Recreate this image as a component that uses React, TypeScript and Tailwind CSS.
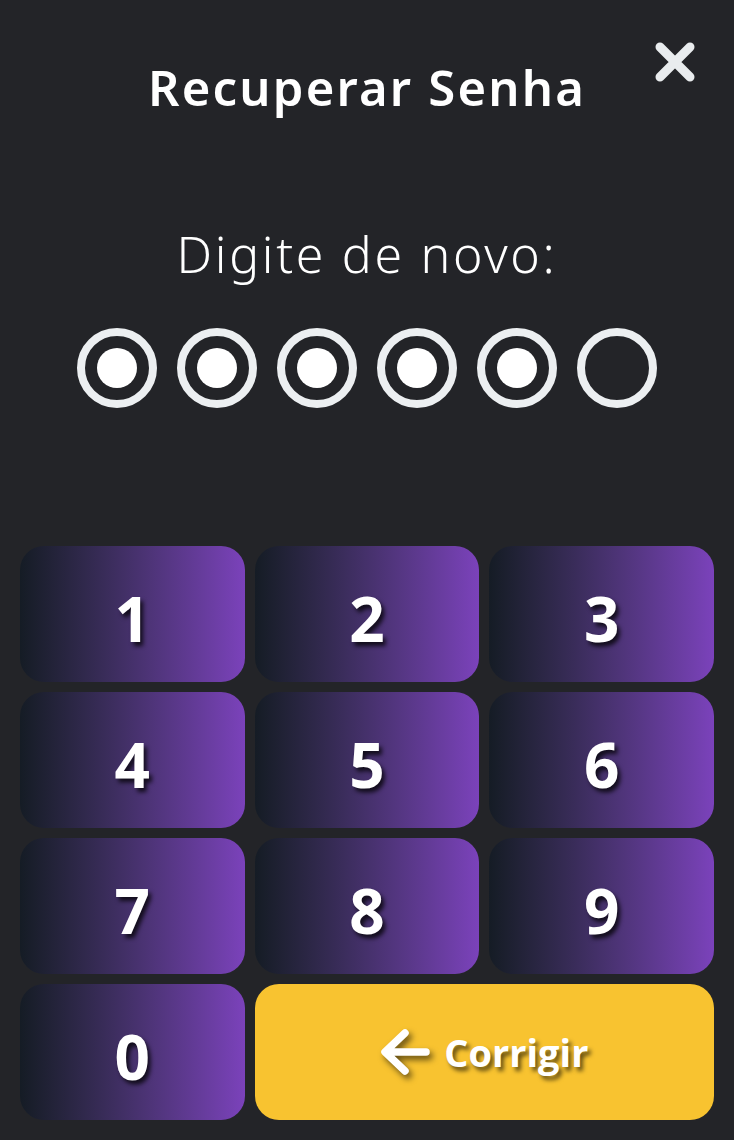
import React from "react";

const keys = ["1", "2", "3", "4", "5", "6", "7", "8", "9"];

function Key({ label }: { label: string }) {
  return (
    <button className="h-[136px] rounded-[24px] bg-gradient-to-r from-[#151c25] to-[#7b42bb] flex items-center justify-center pt-[8px]">
      <span className="text-white text-[62px] font-bold leading-none [text-shadow:3px_4px_4px_rgba(0,0,0,0.75)] [font-family:'Open_Sans',sans-serif]">
        {label}
      </span>
    </button>
  );
}

export default function App() {
  const filled = 5;
  return (
    <div className="relative w-[734px] h-[1140px] bg-[#232428] flex flex-col overflow-hidden [font-family:'Noto_Sans',sans-serif]">
      <button className="absolute right-[38px] top-[41px] w-[42px] h-[42px]" aria-label="Fechar">
        <svg viewBox="0 0 42 42" className="w-full h-full">
          <path d="M6 6L36 36M36 6L6 36" stroke="#e9ecee" strokeWidth="9" strokeLinecap="round" />
        </svg>
      </button>
      <h1 className="mt-[55px] text-center text-white text-[49px] font-semibold leading-[64px] tracking-[2.2px]">
        Recuperar Senha
      </h1>
      <p className="mt-[103px] text-center text-white text-[50px] font-light leading-[64px] tracking-[2.7px]">
        Digite de novo:
      </p>
      <div className="mt-[42px] flex justify-center gap-[20px]">
        {Array.from({ length: 6 }).map((_, i) => (
          <div
            key={i}
            className="w-[80px] h-[80px] rounded-full border-[8px] border-[#eceff1] flex items-center justify-center"
          >
            {i < filled && <div className="w-[40px] h-[40px] rounded-full bg-white" />}
          </div>
        ))}
      </div>
      <div className="flex-1" />
      <div className="grid grid-cols-3 gap-x-[10px] gap-y-[10px] px-[20px] pb-[20px]">
        {keys.map((k) => (
          <Key key={k} label={k} />
        ))}
        <Key label="0" />
        <button className="col-span-2 h-[136px] rounded-[24px] bg-[#f8c330] flex items-center justify-center gap-[14px]">
          <svg width="50" height="46" viewBox="0 0 50 46" className="[filter:drop-shadow(3px_4px_3px_rgba(0,0,0,0.6))]">
            <path d="M25 4L5 23L25 42M6 23H46" stroke="white" strokeWidth="7.5" strokeLinecap="round" strokeLinejoin="round" fill="none" />
          </svg>
          <span className="text-white text-[38px] font-bold leading-none [text-shadow:3px_4px_4px_rgba(0,0,0,0.6)] [font-family:'Open_Sans',sans-serif]">
            Corrigir
          </span>
        </button>
      </div>
    </div>
  );
}
